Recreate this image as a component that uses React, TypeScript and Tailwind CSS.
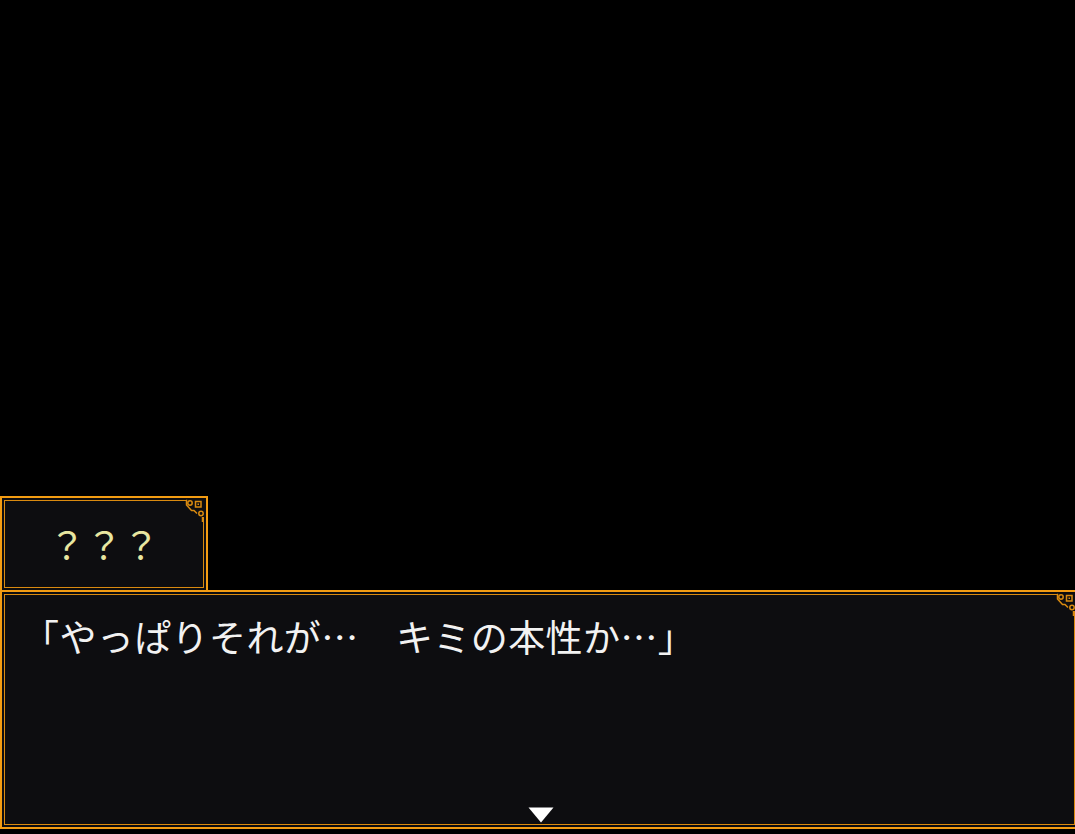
const INNER = '#d98a10';

const CornerOrnament = () => (
  <svg className="absolute top-0 right-0" width={24} height={24} viewBox="0 0 24 24" fill="none">
    <rect x={4} y={0} width={20} height={19} fill="#0d0d10" />
    <g stroke={INNER} strokeWidth={1.5}>
      <path d="M4 2.5 H4.5 V7 L9.5 12.5 H12 L15 15.5" />
      <circle cx={8} cy={5} r={2.2} />
      <rect x={13.5} y={3.5} width={5.5} height={5.5} />
      <circle cx={19} cy={15.5} r={2.2} />
      <path d="M20.5 19 V24" />
    </g>
    <rect x={15.5} y={5.5} width={1.5} height={1.5} fill={INNER} />
  </svg>
);

// double orange frame used by both windows
const Frame = ({ className, children }: { className: string; children?: React.ReactNode }) => (
  <div className={`relative bg-[#0d0d10] border-2 border-[#f39c12] p-[2px] ${className}`}>
    <div className="h-full border border-[#d98a10]">{children}</div>
    <CornerOrnament />
  </div>
);

export default function App() {
  return (
    <div
      className="w-screen h-[834px] bg-black overflow-hidden flex flex-col justify-end pb-[5px]"
      style={{ fontFamily: '"Noto Sans CJK JP", "Noto Sans", sans-serif' }}
    >
      {/* name window */}
      <Frame className="w-[208px] h-[96px] shrink-0 z-10">
        <div className="h-full flex items-center justify-center text-[37px] leading-none text-[#e8e6a0]">
          ？？？
        </div>
      </Frame>

      {/* message window */}
      <Frame className="w-[1079px] h-[239px] shrink-0 -mt-[2px]">
        <div className="pl-[17px] pt-[23px] text-[37px] leading-[37px] tracking-[0.4px] text-[#f2f2f2] whitespace-pre">
          「やっぱりそれが…　キミの本性か…」
        </div>
        <svg className="absolute left-[526px] bottom-[4px]" width={26} height={16} viewBox="0 0 26 16">
          <polygon points="0.5,0.5 25.5,0.5 13,15.5" fill="#ffffff" />
        </svg>
      </Frame>
    </div>
  );
}
